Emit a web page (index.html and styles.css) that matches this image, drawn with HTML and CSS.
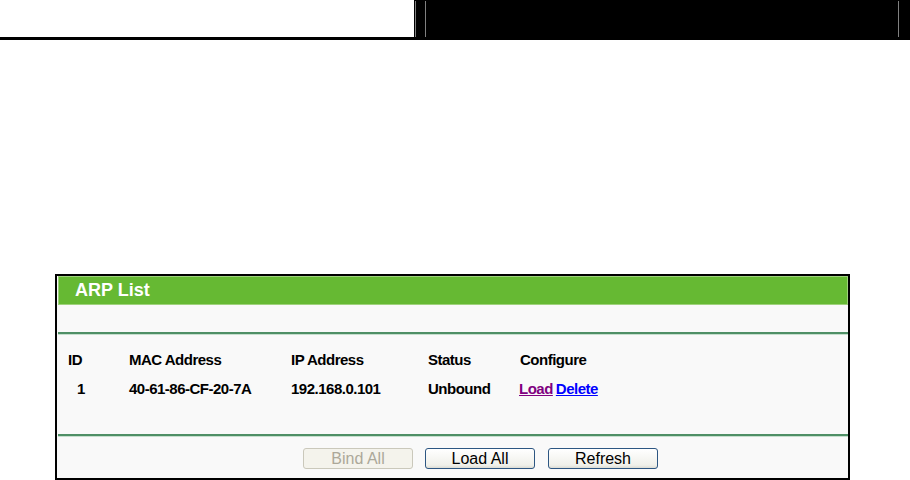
FILE: index.html
```html
<!DOCTYPE html>
<html lang="en">
<head>
    <meta charset="UTF-8">
    <title>ARP List</title>
    <link rel="stylesheet" href="styles.css">
</head>
<body>
    <!-- Bandeau du haut -->
    <div class="topbar">
        <div class="top-left"></div>
        <div class="top-right">
            <div class="tab-outer">
                <div class="tab-inner"></div>
            </div>
        </div>
    </div>
    <div class="top-rule"></div>

    <div class="panel">
        <div class="panel-title">ARP List</div>
        <div class="panel-gap"></div>
        <div class="rule"></div>

        <div class="arp-table">
            <div class="arp-row head">
                <span class="col-id">ID</span>
                <span class="col-mac">MAC Address</span>
                <span class="col-ip">IP Address</span>
                <span class="col-status">Status</span>
                <span class="col-conf">Configure</span>
            </div>
            <div class="arp-row">
                <span class="col-id num">1</span>
                <span class="col-mac">40-61-86-CF-20-7A</span>
                <span class="col-ip">192.168.0.101</span>
                <span class="col-status">Unbound</span>
                <span class="col-conf links"><a href="#" class="visited">Load</a><a href="#">Delete</a></span>
            </div>
        </div>

        <div class="rule"></div>

        <div class="button-row">
            <button class="btn" disabled>Bind All</button>
            <button class="btn">Load All</button>
            <button class="btn">Refresh</button>
        </div>
    </div>
</body>
</html>
```

FILE: styles.css
```css
body {
    margin: 0;
    padding: 0;
    background: #fff;
    font-family: "Liberation Sans", Arial, sans-serif;
    color: #000;
}

/* Bandeau */
.topbar {
    display: flex;
    height: 37px;
}

.top-left {
    width: 414px;
    background: #fff;
}

.top-right {
    flex: 1;
    display: flex;
    background: #000;
    padding: 1px 11px 0 1px;
}

.tab-outer {
    flex: 1;
    display: flex;
    border-left: 1px solid #808080;
    padding-left: 9px;
}

.tab-inner {
    flex: 1;
    border-left: 1px solid #808080;
    border-right: 1px solid #808080;
}

.top-rule {
    height: 3px;
    background: #000;
}

/* Panneau ARP */
.panel {
    width: 791px;
    margin: 234px 0 0 55px;
    border: 2px solid #000;
    background: #f9f9f9;
    padding: 0 0 9px 0;
}

.panel-title {
    height: 27px;
    margin: 0 0 0 1px;
    border: 1px solid #9fd27c;
    background: #66b933;
    color: #fff;
    font-size: 18px;
    font-weight: bold;
    line-height: 27px;
    padding-left: 16px;
}

.panel-gap {
    height: 27px;
}

.rule {
    height: 2px;
    margin-left: 1px;
    background: #4f8f66;
    border-bottom: 1px solid #c6dfce;
}

.arp-table {
    padding: 10px 0 31px 11px;
}

.arp-row {
    display: flex;
    height: 29px;
    align-items: center;
    font-size: 15px;
    font-weight: bold;
    letter-spacing: -0.5px;
}

.col-id { width: 61px; }
.col-id.num { padding-left: 9px; width: 52px; }
.col-mac { width: 162px; }
.col-ip { width: 137px; }
.col-status { width: 92px; }

.links {
    display: flex;
    gap: 3px;
    margin-left: -1px;
}

.col-conf a {
    color: #0000ff;
    text-decoration: underline;
}

.col-conf a.visited {
    color: #800080;
}

/* Boutons */
.button-row {
    display: flex;
    gap: 12px;
    padding: 11px 0 0 246px;
}

.btn {
    width: 110px;
    height: 21px;
    padding: 0;
    font-family: "Liberation Sans", Arial, sans-serif;
    font-size: 16px;
    color: #000;
    background: linear-gradient(#ffffff, #f0f0ea 85%, #dcdcd4);
    border: 1px solid #2d5682;
    border-radius: 3px;
}

.btn + .btn + .btn {
    margin-left: 1px;
}

.btn:disabled {
    color: #aca899;
    background: #f4f3ec;
    border-color: #cac8bb;
}
```
